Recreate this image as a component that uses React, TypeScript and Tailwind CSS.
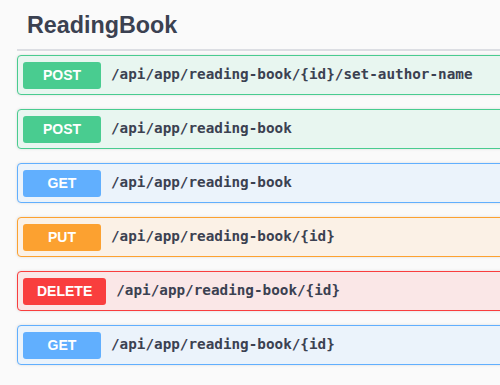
const ROWS: { method: string; path: string }[] = [
  { method: "POST", path: "/api/app/reading-book/{id}/set-author-name" },
  { method: "POST", path: "/api/app/reading-book" },
  { method: "GET", path: "/api/app/reading-book" },
  { method: "PUT", path: "/api/app/reading-book/{id}" },
  { method: "DELETE", path: "/api/app/reading-book/{id}" },
  { method: "GET", path: "/api/app/reading-book/{id}" },
];

const STYLES: Record<string, { box: string; badge: string }> = {
  POST: { box: "border-[#49cc90] bg-[#e8f6f0]", badge: "bg-[#49cc90] min-w-[78px]" },
  GET: { box: "border-[#61affe] bg-[#ebf3fb]", badge: "bg-[#61affe] min-w-[78px]" },
  PUT: { box: "border-[#fca130] bg-[#fbf1e6]", badge: "bg-[#fca130] min-w-[78px]" },
  DELETE: { box: "border-[#f93e3e] bg-[#fae7e7]", badge: "bg-[#f93e3e] min-w-[83px]" },
};

function OpBlock({ method, path }: { method: string; path: string }) {
  const s = STYLES[method];
  return (
    <div className={`mb-[14px] flex h-[40px] items-center rounded-[4px] border p-[5px] shadow-[0_0_3px_rgba(0,0,0,0.12)] ${s.box}`}>
      <span
        className={`mr-[10px] flex h-[27px] items-center justify-center rounded-[3px] px-[14px] text-[14px] font-bold text-white ${s.badge}`}
        style={{ fontFamily: "'Liberation Sans', Arial, sans-serif" }}
      >
        {method}
      </span>
      <span
        className="whitespace-nowrap text-[14.3px] font-bold text-[#3b4151]"
        style={{ fontFamily: "'DejaVu Sans Mono', monospace" }}
      >
        {path}
      </span>
    </div>
  );
}

export default function App() {
  return (
    <div className="h-[385px] w-[500px] overflow-hidden bg-[#fafafa] pl-[17px]" style={{ fontFamily: "'Liberation Sans', Arial, sans-serif" }}>
      <div className="-mr-[40px]">
        <div className="border-b-2 border-[#dcdee3] pb-[9px] pl-[10px] pt-[10px]">
          <h3 className="text-[23.3px] font-bold leading-[30px] text-[#3b4151]">ReadingBook</h3>
        </div>
        <div className="pt-[4px]">
          {ROWS.map((r, i) => (
            <OpBlock key={i} method={r.method} path={r.path} />
          ))}
        </div>
      </div>
    </div>
  );
}
